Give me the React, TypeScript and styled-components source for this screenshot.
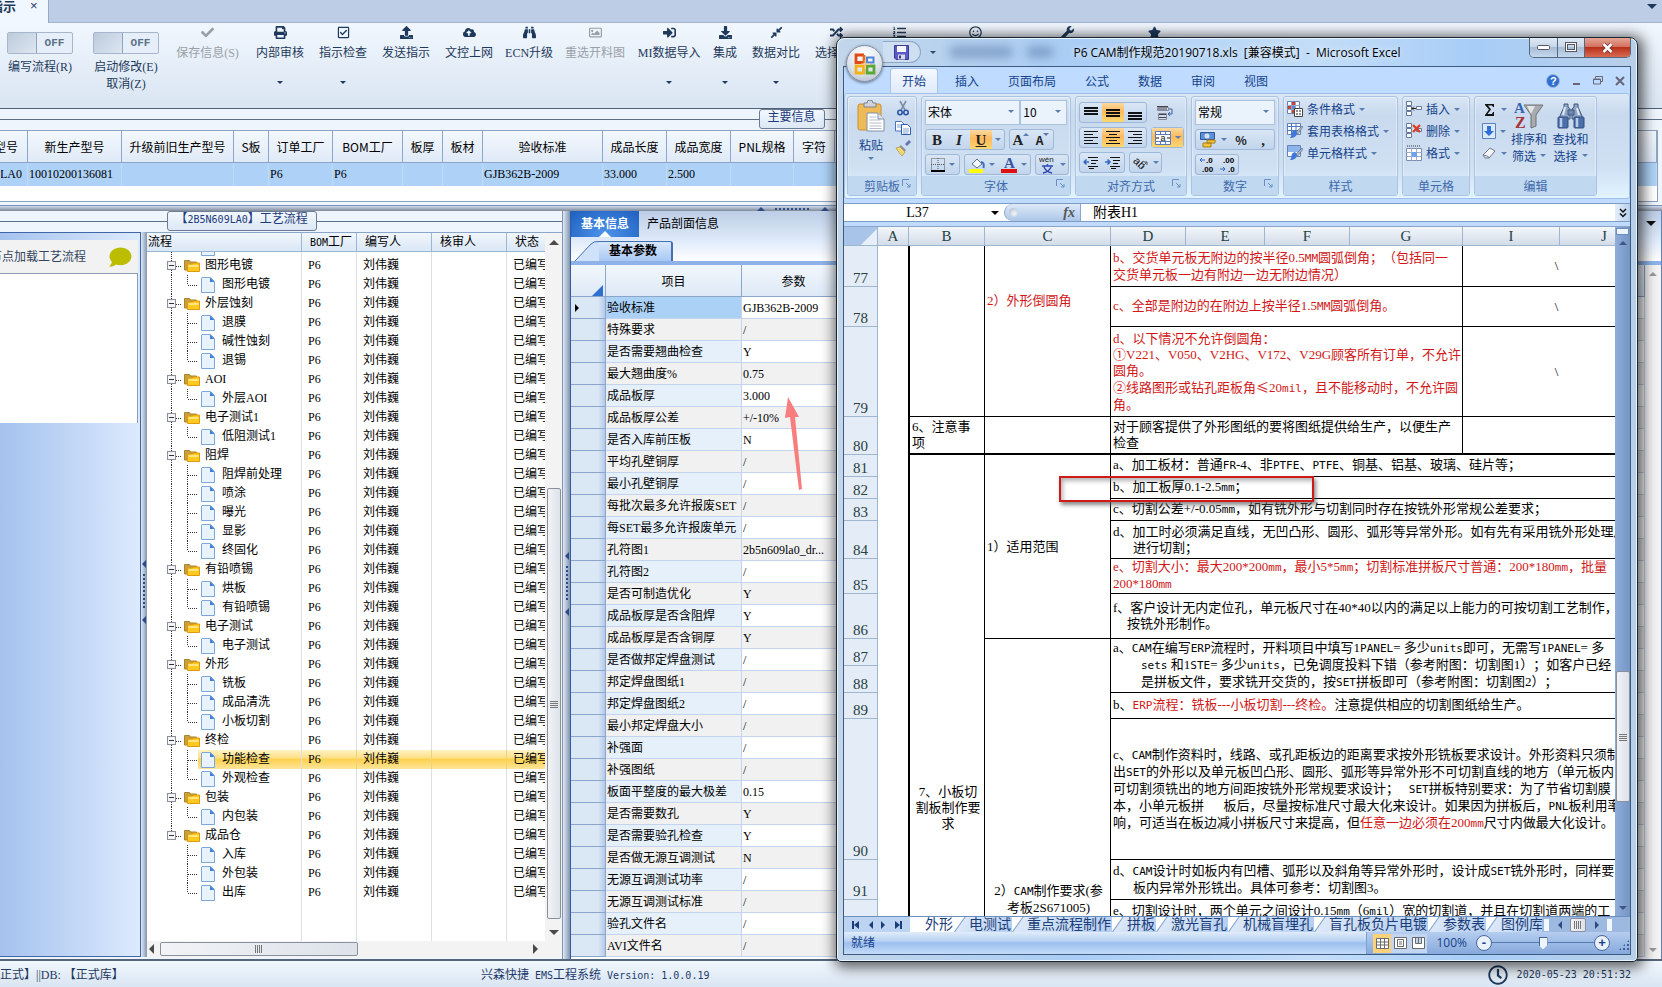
import React from 'react';
import styled, { createGlobalStyle, css } from 'styled-components';
import {
  FaCheck, FaPrint, FaRegCheckSquare, FaUpload, FaCloudUploadAlt, FaBinoculars, FaRegImage, FaSignInAlt,
  FaDownload, FaCompressAlt, FaRandom, FaListOl, FaRegSmile, FaWrench, FaStar, FaComment, FaRegClock,
} from 'react-icons/fa';

const song = '"Liberation Serif", "Noto Sans CJK SC", serif';
const hei = '"Noto Sans CJK SC", sans-serif';
const segoe = '"Open Sans", "Noto Sans CJK SC", sans-serif';

const Global = createGlobalStyle`
  * { box-sizing: border-box; }
  html, body { margin: 0; height: 100%; overflow: hidden; }
  body { font: 12px/16px ${song}; color: #000; background: #dfeaf7; text-spacing-trim: space-all; }
  #root { height: 100%; }
  button, input, select { font: inherit; color: inherit; margin: 0; padding: 0; border: 0; background: none; border-radius: 0; }
  table { border-collapse: separate; border-spacing: 0; table-layout: fixed; }
  th, td { padding: 0; font-weight: normal; text-align: left; }
`;

/* ---------- shared parts ---------- */

const Mono = styled.span<{ $size: number }>`
  font-family: "DejaVu Sans Mono", monospace;
  font-size: ${(p) => p.$size}px;
`;

const Wide = styled.span`
  font-family: ${hei};
`;

function Words({ children, size = 11 }: { children: string; size?: number }) {
  return (
    <>
      {children.split(/([A-Z]{2,}|mm|mil|units|sets|≤)/).map((part, i) => {
        if (part === '≤') return <Wide key={i}>{part}</Wide>;
        return i % 2 ? <Mono key={i} $size={size}>{part}</Mono> : part;
      })}
    </>
  );
}

const Caret = styled.i<{ $color?: string; $size?: number; $up?: boolean }>`
  flex: none;
  width: 0;
  height: 0;
  border: ${(p) => p.$size ?? 3}px solid transparent;
  border-${(p) => (p.$up ? 'bottom' : 'top')}-color: ${(p) => p.$color ?? '#5a7db0'};
  border-${(p) => (p.$up ? 'top' : 'bottom')}-width: 0;
`;

const SideCaret = styled.i<{ $right?: boolean; $color?: string; $size?: number }>`
  display: block;
  flex: none;
  width: 0;
  height: 0;
  border: ${(p) => p.$size ?? 5}px solid transparent;
  border-${(p) => (p.$right ? 'left' : 'right')}-color: ${(p) => p.$color ?? '#4a4a4a'};
  border-${(p) => (p.$right ? 'right' : 'left')}-width: 0;
`;

const Tail = styled.div`
  display: flex;
  justify-content: flex-end;
  overflow: hidden;
  white-space: nowrap;
`;

/* ---------- host application ---------- */

const Page = styled.div`
  position: relative;
  display: flex;
  flex-direction: column;
  height: 100vh;
  overflow: hidden;
  background: #edf4fc;
`;

const DocTabs = styled.nav`
  flex: none;
  display: flex;
  justify-content: space-between;
  height: 23px;
  background: #bccde5;
  border-bottom: 1px solid #9fb5d0;
`;

const DocTab = styled.div`
  display: flex;
  gap: 14px;
  width: 49px;
  height: 23px;
  background: #f1f7fe;
  border-right: 1px solid #93abc9;
  font: bold 13px/12px ${hei};
  color: #1e395b;
  ${Tail} { width: 16px; flex: none; }
  button { height: 12px; font: 13px/12px "Liberation Sans", sans-serif; }
`;

const TabMenu = styled.button`
  padding: 4px 5px 0;
  display: flex;
`;

const Toolbar = styled.header`
  flex: none;
  display: flex;
  gap: 15px;
  height: 86px;
  padding: 3px 0 0 6px;
  background: linear-gradient(#f1f7fe, #d9e5f2);
  border-bottom: 1px solid #4f6178;
  color: #1e395b;
`;

const Switches = styled.div`
  display: flex;
  gap: 18px;
  width: 153px;
  flex: none;
`;

const SwitchItem = styled.label`
  flex: none;
  display: flex;
  flex-direction: column;
  align-items: center;
  line-height: 17px;
  padding-top: 6px;
  width: 68px;
  white-space: nowrap;
  input { position: absolute; opacity: 0; }
`;

const Switch = styled.span`
  display: flex;
  flex: none;
  width: 66px;
  height: 22px;
  margin-bottom: 5px;
  border: 1px solid #a7b6ca;
  border-radius: 2px;
  background: #e6eff9;
  font: bold 11px/20px "Liberation Mono", monospace;
  color: #5c7188;
  &::before {
    content: "";
    width: 28px;
    border-right: 1px solid #8fa5bf;
    background: linear-gradient(135deg, #bccadb, #dde7f2);
  }
  b { flex: 1; text-align: center; }
`;

const Tool = styled.button<{ $off?: boolean; $w?: number; $start?: boolean }>`
  flex: none;
  display: flex;
  flex-direction: column;
  align-items: center;
  width: ${(p) => (p.$w ? `${p.$w}px` : 'auto')};
  height: 70px;
  white-space: nowrap;
  color: ${(p) => (p.$off ? '#9aa0a8' : 'inherit')};
  svg { width: 13px; height: 13px; margin: 0 0 4px; }
  span { line-height: 20px; align-self: ${(p) => (p.$start ? 'flex-start' : 'auto')}; }
  i { margin-top: 18px; }
`;

const Legend = styled.div<{ $l: number; $r: number; $h: number }>`
  flex: none;
  display: flex;
  height: ${(p) => p.$h}px;
  color: #1e3a7b;
  &::before, &::after {
    content: "";
    flex: ${(p) => p.$l} 0 0;
    height: 10px;
    border-bottom: 1px solid #5f6f88;
  }
  &::after { flex-grow: ${(p) => p.$r}; }
  > span {
    height: 20px;
    padding: 0 8px;
    border: 1px solid #6b7c96;
    border-radius: 3px;
    background: linear-gradient(#f2f8fe, #dce8f5);
    line-height: 14px;
    white-space: nowrap;
  }
`;

const MainInfo = styled.section`
  flex: none;
  height: 97px;
  background: #eef5fd;
  border-bottom: 1px solid #7b94b5;
`;

const InfoBody = styled.div`
  height: 72px;
  margin-right: 4px;
  background: #fff;
  border: 1px solid #8ba2c2;
  border-left: 0;
`;

const InfoTable = styled.table`
  width: 100%;
  th {
    height: 32px;
    border-right: 1px solid #8ba6c9;
    border-bottom: 1px solid #8ba6c9;
    background: linear-gradient(#f4f8fd, #dfeaf7);
    font-family: ${hei};
    text-align: center;
    white-space: nowrap;
  }
  td {
    height: 23px;
    padding: 0 0 2px 1px;
    border-right: 1px solid #c0dbf6;
    background: #aed2f7;
    white-space: nowrap;
  }
  th ${Tail} { padding-right: 9px; }
  td ${Tail} { padding-right: 5px; }
`;

const HSplit = styled.div`
  flex: none;
  display: flex;
  align-items: center;
  gap: 10px;
  height: 5px;
  padding-left: 757px;
  background: linear-gradient(#cfdcf0, #7f8896);
`;

const Dots = styled.i<{ $v?: boolean }>`
  ${(p) => (p.$v
    ? css`width: 2px; height: 36px; background: repeating-linear-gradient(#2d4a85 0 2px, transparent 2px 4px);`
    : css`width: 36px; height: 2px; background: repeating-linear-gradient(90deg, #2d4a85 0 2px, transparent 2px 4px);`)}
`;

const Work = styled.main`
  flex: 1;
  min-height: 0;
  display: flex;
  border-bottom: 2px solid #56657b;
`;

const FlowPanel = styled.section`
  flex: none;
  width: 563px;
  display: flex;
  flex-direction: column;
  background: #eef5fd;
  border-right: 1px solid #8595ad;
`;

const FlowBody = styled.div`
  flex: 1;
  min-height: 0;
  display: flex;
  padding-bottom: 2px;
`;

const Messages = styled.aside`
  flex: none;
  width: 141px;
  padding: 7px 2px 0 0;
  border: 1px solid #3f67a8;
  border-width: 1px 1px 1px 0;
  background: linear-gradient(90deg, #a5c2ee, #dceafd);
`;

const MessageHead = styled.div`
  display: flex;
  align-items: center;
  gap: 22px;
  height: 34px;
  background: #f2f2f3;
  border-bottom: 1px solid #8f9db3;
  color: #33465e;
  ${Tail} { width: 86px; }
  svg { width: 25px; height: 22px; color: #bcbc00; }
`;

const MessageBox = styled.div`
  height: 149px;
  background: #fff;
  border-right: 1px solid #8f9db3;
`;

const VSplit = styled.div<{ $w: number; $top: number }>`
  flex: none;
  display: flex;
  flex-direction: column;
  align-items: center;
  gap: 6px;
  width: ${(p) => p.$w}px;
  padding-top: ${(p) => p.$top}px;
  background: linear-gradient(90deg, #dfeaf8, #8495ad);
`;

const TreeBox = styled.div`
  flex: 1;
  min-width: 0;
  display: flex;
  background: #fff;
  border-top: 1px solid #8ba6c9;
`;

const TreeMain = styled.div`
  flex: 1;
  min-width: 0;
  display: flex;
  flex-direction: column;
  overflow: hidden;
`;

const TreeScroll = styled.div`
  flex: 1;
  min-height: 0;
  overflow: hidden;
`;

const TreeTable = styled.table`
  width: 100%;
  height: 100%;
  th {
    height: 19px;
    padding-left: 8px;
    border-right: 1px solid #9db6d6;
    border-bottom: 1px solid #9db6d6;
    background: linear-gradient(#f0f6fd, #dbe7f6);
    line-height: 16px;
    white-space: nowrap;
  }
  th:first-child { padding-left: 1px; }
  td {
    border-right: 1px solid #dcdfe4;
    overflow: hidden;
    white-space: nowrap;
  }
  th:last-child, td:last-child { border-right: 0; }
`;

const gold = 'linear-gradient(#fff2c4, #fde08a 40%, #fdd24f 50%, #fee59a)';

const TreeRow = styled.tr<{ $active?: boolean }>`
  height: 19px;
  td { height: 19px; padding-left: 6px; line-height: 19px; }
  td:first-child { padding-left: 0; }
  ${(p) => p.$active && css`td + td { background: ${gold}; border-color: #efd27c; }`}
`;

const dots = 'repeating-linear-gradient(#333 0 1px, transparent 1px 2px)';
const hdots = 'repeating-linear-gradient(90deg, #333 0 1px, transparent 1px 2px)';

const NodeCell = styled.div<{ $group?: boolean; $trunk: string; $branch: string }>`
  display: flex;
  align-items: center;
  height: 100%;
  padding-left: ${(p) => (p.$group ? 20 : 51)}px;
  background:
    ${dots} 24px 0 / 1px ${(p) => p.$trunk} no-repeat,
    ${dots} 40px 0 / 1px ${(p) => p.$branch} no-repeat,
    ${hdots} ${(p) => (p.$group ? '29px 10px / 6px' : '41px 10px / 9px')} 1px no-repeat;
`;

const Expander = styled.button`
  width: 9px;
  height: 9px;
  margin-right: 8px;
  border: 1px solid #8a8f99;
  background: linear-gradient(#333, #333) 1px 3px / 5px 1px no-repeat #f4f4f4;
`;

const NodeLabel = styled.span<{ $active?: boolean; $group?: boolean }>`
  display: flex;
  align-items: center;
  gap: 7px;
  flex: 1;
  height: 19px;
  padding-left: ${(p) => (p.$group ? 5 : 3)}px;
  background: ${(p) => (p.$active ? gold : 'none')};
`;

const PeekRow = styled.tr`
  height: 4px;
  td { height: 4px; }
  div { height: 4px; align-items: flex-end; overflow: hidden; }
`;

const VBar = styled.div<{ $w?: number }>`
  flex: none;
  display: flex;
  flex-direction: column;
  align-items: center;
  justify-content: space-between;
  width: ${(p) => p.$w ?? 17}px;
  padding: 7px 0;
  background: #f3f3f4;
`;

const Thumb = styled.div<{ $h?: number; $w?: number }>`
  flex: none;
  display: flex;
  align-items: center;
  justify-content: center;
  width: ${(p) => (p.$w ? `${p.$w}px` : '14px')};
  height: ${(p) => (p.$h ? `${p.$h}px` : '14px')};
  border: 1px solid #8b919c;
  border-radius: 2px;
  background: linear-gradient(90deg, #f1f3f6, #dde2ea);
  &::after {
    content: "";
    width: 8px;
    height: 8px;
    background: repeating-linear-gradient(${(p) => (p.$w ? '90deg' : '0deg')}, #777 0 1px, transparent 1px 2px);
  }
`;

const TreeVBar = styled(VBar)`
  padding-bottom: 22px;
  ${Thumb} { margin: auto 0 11px; }
`;

const HBar = styled.div`
  flex: none;
  display: flex;
  align-items: center;
  gap: 6px;
  height: 16px;
  padding: 0 7px 0 2px;
  background: #f3f3f4;
  ${SideCaret}:last-child { margin-left: auto; }
`;

const ParamPanel = styled.section`
  flex: 1;
  min-width: 0;
  display: flex;
  flex-direction: column;
  border-left: 1px solid #2f5da8;
  border-right: 1px solid #5f83b8;
  background: #fff;
`;

const PageTabs = styled.div`
  flex: none;
  display: flex;
  align-items: stretch;
  height: 26px;
  background: linear-gradient(#bccde6, #dbe7f6);
  font-size: 12px;
  ${TabMenu} { margin-left: auto; padding-top: 10px; }
`;

const PageTab = styled.button<{ $active?: boolean }>`
  position: relative;
  width: ${(p) => (p.$active ? 68 : 88)}px;
  line-height: 22px;
  font-weight: ${(p) => (p.$active ? 'bold' : 'normal')};
  color: ${(p) => (p.$active ? '#fff' : '#000')};
  background: ${(p) => (p.$active ? 'radial-gradient(ellipse at 50% 90%, #4d94ea, #1f5fc0)' : 'none')};
  ${(p) => p.$active && css`
    &::after {
      content: "";
      position: absolute;
      left: 28px;
      bottom: 0;
      border: 6px solid transparent;
      border-top-width: 0;
      border-bottom-color: #fff;
    }
  `}
`;

const SubTabs = styled.div`
  flex: none;
  display: flex;
  align-items: flex-end;
  height: 28px;
  padding-left: 4px;
  border-bottom: 4px solid #8fb3e8;
  background: linear-gradient(#dae7fa, #fff);
`;

const SubTab = styled.button`
  display: flex;
  align-items: stretch;
  height: 20px;
  font-weight: bold;
  line-height: 18px;
  svg { display: block; }
  span {
    width: 74px;
    padding-left: 10px;
    text-align: left;
    border: solid #4470b4;
    border-width: 1px 2px 0 0;
    border-radius: 0 3px 0 0;
    background: linear-gradient(#d8e7fb, #a9c8f3);
  }
`;

const ParamBody = styled.div`
  flex: 1;
  min-height: 0;
  display: flex;
  overflow: hidden;
`;

const ParamTable = styled.table`
  flex: 1;
  min-width: 0;
  align-self: flex-start;
  th, td { border-right: 1px solid #c3d4ec; border-bottom: 1px solid #c3d4ec; white-space: nowrap; overflow: hidden; }
  thead th {
    height: 32px;
    border-color: #8ba6c9;
    background: linear-gradient(#f2f7fd, #dde9f6);
    text-align: center;
    font-family: ${hei};
  }
  thead th:first-child { vertical-align: bottom; text-align: right; padding-right: 2px; line-height: 0; }
  tbody tr { height: 22px; background: #fff; }
  tbody tr:nth-child(even) { background: #f1f1f1; }
  tbody td { padding-left: 1px; line-height: 20px; }
  tbody td:first-child { border-color: #8ba6c9; background: linear-gradient(90deg, #dae7f5 80%, #b4c8ea); padding-left: 4px; }
  tbody tr:nth-child(odd) td:nth-child(2) { background: #e6f0fb; }
  tbody tr:first-child td:nth-child(2) { background: #abd1f7; }
`;

const StatusBar = styled.footer`
  flex: none;
  display: flex;
  align-items: center;
  justify-content: space-between;
  height: 26px;
  padding: 2px 31px 0 0;
  background: linear-gradient(#f1f7fe, #d9e5f2);
  color: #1e395b;
  white-space: pre;
  > span:first-child { width: 481px; }
  > span:nth-child(2) { flex: 1; color: #1e3a6b; }
`;

const Clock = styled.span`
  display: flex;
  align-items: center;
  gap: 9px;
  svg { width: 20px; height: 20px; }
`;

const Arrow = styled.svg`
  position: absolute;
  left: 780px;
  top: 396px;
  pointer-events: none;
`;

/* ---------- spreadsheet window ---------- */

const Win = styled.section`
  position: absolute;
  left: 836px;
  right: 24px;
  top: 37px;
  bottom: 25px;
  display: flex;
  flex-direction: column;
  padding: 0 6px 6px;
  border: 1px solid #1b2533;
  border-radius: 8px 8px 5px 5px;
  background: linear-gradient(90deg, #c3d6ea, #a9cdf5 30%, #c3ddf8 60%, #a7cdf7 80%, #b8cfe8);
  box-shadow: inset 0 0 0 1px #eaf4ff, 2px 2px 14px 3px rgba(0, 0, 0, 0.65);
`;

const TitleBar = styled.header`
  flex: none;
  display: grid;
  grid-template-columns: 1fr auto 1fr;
  align-items: center;
  height: 28px;
  h1 { margin: 0; padding-top: 2px; font: 12px/16px ${segoe}; white-space: pre; text-shadow: 0 0 6px #fff; }
`;

const Quick = styled.div`
  display: flex;
  align-items: center;
  gap: 9px;
  margin-left: 40px;
`;

const Glass = styled.i<{ $w: number }>`
  width: ${(p) => p.$w}px;
  height: 12px;
  margin-left: 4px;
  border-radius: 6px;
  background: rgba(60, 95, 145, 0.4);
  filter: blur(5px);
`;

const QuickPill = styled.div`
  flex: none;
  display: flex;
  align-items: center;
  justify-content: center;
  width: 38px;
  height: 22px;
  border: 1px solid #8fa6c4;
  border-left: 0;
  border-radius: 0 11px 11px 0;
  background: #cfdff2;
`;

const WinButtons = styled.div`
  justify-self: end;
  align-self: start;
  display: flex;
  height: 20px;
  border: 1px solid #56677f;
  border-top: 0;
  border-radius: 0 0 5px 5px;
  overflow: hidden;
`;

const WinButton = styled.button<{ $close?: boolean }>`
  display: flex;
  align-items: center;
  justify-content: center;
  width: ${(p) => (p.$close ? 46 : 27)}px;
  border-left: 1px solid #56677f;
  background: ${(p) => (p.$close
    ? 'linear-gradient(#e5a595, #d2705c 48%, #b8301c 50%, #d96b50)'
    : 'linear-gradient(#dfe9f5, #c6d6e8 48%, #a8bdd6 50%, #c4d8ee)')};
  &:first-child { border-left: 0; }
`;

const OfficeButton = styled.button`
  position: absolute;
  left: 9px;
  top: 7px;
  width: 37px;
  height: 37px;
  && {
    border: 1px solid #7f8ea3;
    border-radius: 50%;
    background: radial-gradient(circle at 50% 25%, #fff, #dbe1ea 60%, #a9b6c9);
  }
  display: flex;
  align-items: center;
  justify-content: center;
  box-shadow: 0 1px 3px rgba(0, 0, 0, 0.5);
`;

const Client = styled.div`
  flex: 1;
  min-height: 0;
  display: flex;
  flex-direction: column;
  border: 1px solid #3d5a80;
  background: #bfdbff;
`;

const RibbonTabs = styled.nav`
  flex: none;
  display: flex;
  align-items: flex-end;
  height: 26px;
  padding-left: 46px;
  font: 12px/16px ${hei};
  color: #15428b;
`;

const RibbonTab = styled.button<{ $active?: boolean }>`
  height: 25px;
  padding: ${(p) => (p.$active ? '0 11px' : '0 14px 0 15px')};
  margin-right: ${(p) => (p.$active ? 2 : 0)}px;
  ${(p) => p.$active && css`
    && {
      border: 1px solid #a8c4e6;
      border-bottom: 0;
      border-radius: 3px 3px 0 0;
      background: linear-gradient(#f4f9ff, #dfeafa);
    }
  `}
`;

const BookTools = styled.div`
  display: flex;
  align-items: center;
  gap: 12px;
  height: 25px;
  margin-left: auto;
  padding-right: 5px;
  button { display: flex; }
`;

const Ribbon = styled.div`
  flex: none;
  display: flex;
  gap: 4px;
  height: 106px;
  padding: 2px 0 3px 2px;
  border: 1px solid #a0c0e8;
  border-radius: 3px;
  background: linear-gradient(#dbe7f5, #c9daee 20%, #cfe0f3 70%, #e2f4ff);
  font: 12px/16px ${hei};
  color: #15428b;
`;

const Group = styled.fieldset<{ $w: number }>`
  flex: none;
  display: flex;
  flex-direction: column;
  width: ${(p) => p.$w}px;
  min-width: 0;
  height: 100px;
  margin: 0;
  padding: 0;
  border: 1px solid #a9c3e0;
  border-radius: 3px;
  box-shadow: inset 0 0 0 1px rgba(255, 255, 255, 0.4);
`;

const GroupBody = styled.div<{ $row?: boolean; $gap?: number; $pad?: number }>`
  flex: 1;
  min-height: 0;
  display: flex;
  flex-direction: ${(p) => (p.$row ? 'row' : 'column')};
  justify-content: ${(p) => (p.$row ? 'space-evenly' : 'flex-start')};
  gap: ${(p) => p.$gap ?? 4}px;
  padding: ${(p) => p.$pad ?? 3}px 3px 0;
`;

const GroupCaption = styled.div`
  flex: none;
  display: flex;
  align-items: center;
  justify-content: center;
  height: 19px;
  background: #c1d8f1;
  color: #3e6aaa;
  span { flex: 1; text-align: center; }
  svg { margin: 0 5px 4px -14px; }
`;

const Row = styled.div<{ $gap?: number }>`
  display: flex;
  align-items: center;
  gap: ${(p) => p.$gap ?? 4}px;
`;

const Cluster = styled.div`
  display: flex;
  align-items: stretch;
  height: 21px;
  border: 1px solid #9db8d9;
  border-radius: 3px;
  background: linear-gradient(#d9e6f5, #c2d5ec);
`;

const Small = styled.button<{ $on?: boolean; $w?: number; $serif?: boolean; $raised?: boolean }>`
  display: flex;
  align-items: center;
  justify-content: center;
  gap: ${(p) => (p.$raised ? 0 : 4)}px;
  width: ${(p) => p.$w ?? 22}px;
  && {
    color: #222;
    background: ${(p) => (p.$on ? 'linear-gradient(#fbd9a0, #fdb95c 45%, #fcd76f)' : 'none')};
    ${(p) => p.$serif && css`font: bold 15px/18px "Liberation Serif", serif;`}
  }
  ${(p) => p.$raised && css`i { align-self: flex-start; margin-top: 3px; }`}
`;

const Picker = styled.label<{ $w: number }>`
  display: flex;
  align-items: center;
  width: ${(p) => p.$w}px;
  height: 25px;
  padding: 0 5px 2px 2px;
  border: 1px solid #abc1de;
  background: #eaf2fb;
  color: #000;
  select { flex: 1; min-width: 0; appearance: none; outline: 0; }
`;

const Command = styled.button`
  display: flex;
  align-items: center;
  gap: 4px;
  height: 18px;
  white-space: nowrap;
`;

const Big = styled.button<{ $w: number }>`
  display: flex;
  flex-direction: column;
  align-items: center;
  width: ${(p) => p.$w}px;
  span { display: flex; align-items: center; gap: 4px; line-height: 17px; }
`;

const Paste = styled(Big)`
  span { margin: 4px 0; }
`;

const Stack = styled.div<{ $gap?: number }>`
  display: flex;
  flex-direction: column;
  gap: ${(p) => p.$gap ?? 4}px;
`;

const FormulaBar = styled.div`
  flex: none;
  display: flex;
  height: 19px;
  margin: 4px 0;
  background: #fff;
  border-top: 1px solid #7e9cc4;
  border-bottom: 1px solid #7e9cc4;
  font: 14px/17px ${song};
`;

const NameBox = styled.label`
  display: flex;
  align-items: center;
  width: 160px;
  padding-right: 5px;
  input { flex: 1; min-width: 0; text-align: center; }
`;

const FxBox = styled.div`
  display: flex;
  align-items: center;
  justify-content: space-between;
  width: 77px;
  padding: 0 5px 0 4px;
  border-radius: 9px 0 0 9px;
  border: solid #8ba7cf;
  border-width: 0 1px;
  background: linear-gradient(#dde9f8, #adc7e9);
  i { width: 9px; height: 9px; border-radius: 50%; background: radial-gradient(circle at 60% 60%, #f5f8fc, #a5b6cc); }
  em { font: italic bold 14px/16px "Liberation Serif", serif; color: #555; }
`;

const FormulaInput = styled.input`
  && { flex: 1; min-width: 0; padding-left: 12px; }
`;

const ExpandButton = styled.button`
  display: flex;
  align-items: center;
  justify-content: center;
  width: 15px;
  && { background: linear-gradient(90deg, #e4eefa, #b8cfec); }
`;

const SheetArea = styled.div`
  position: relative;
  flex: 1;
  min-height: 0;
  display: flex;
  border-top: 1px solid #8aa5c8;
`;

const SheetScroll = styled.div`
  flex: 1;
  min-width: 0;
  overflow: hidden;
  background: #fff;
`;

const Sheet = styled.table`
  width: 805px;
  font: 13px/16px ${song};
  thead th {
    height: 19px;
    border-right: 1px solid #9eb6ce;
    border-bottom: 1px solid #9eb6ce;
    background: linear-gradient(#f3f7fb, #d3dce9);
    font-size: 15px;
    text-align: center;
    color: #27413e;
  }
  thead th:first-child { background: linear-gradient(135deg, #a9c4e9 68%, #e6effa 69%); }
  tbody th {
    border-right: 1px solid #9eb6ce;
    border-bottom: 1px solid #9eb6ce;
    background: #e4ecf7;
    vertical-align: bottom;
    text-align: center;
    font-size: 15px;
    color: #27413e;
  }
`;

const Cell = styled.td<{ $red?: boolean; $center?: boolean; $thick?: boolean; $left?: boolean; $top?: boolean; $open?: boolean; $below?: number }>`
  && {
    padding: ${(p) => (p.$top ? 3 : 0)}px 0 ${(p) => p.$below ?? 0}px 2px;
    border-right: 1px solid #000;
    border-bottom: ${(p) => (p.$open ? 0 : p.$thick ? 2 : 1)}px solid #000;
    vertical-align: ${(p) => (p.$top ? 'top' : 'middle')};
    text-align: ${(p) => (p.$center ? 'center' : 'left')};
    color: ${(p) => (p.$red ? '#d01818' : '#000')};
    white-space: pre;
    overflow: hidden;
    ${(p) => p.$left && css`border-left: 1px solid #000;`}
  }
`;

const Ln = styled.div<{ $in?: number }>`
  padding-left: ${(p) => p.$in ?? 0}px;
`;

const Red = styled.span`
  color: #d01818;
`;

const Mark = styled.div`
  position: absolute;
  left: 215px;
  top: 249px;
  width: 255px;
  height: 26px;
  border: 2px solid #cf1a1a;
  box-shadow: 2px 3px 4px rgba(90, 90, 90, 0.7), inset 2px 3px 4px rgba(90, 90, 90, 0.45);
`;

const SheetVBar = styled.div`
  flex: none;
  display: flex;
  flex-direction: column;
  align-items: center;
  width: 15px;
  padding: 1px 0 6px;
  background: linear-gradient(90deg, #8fadd8, #7595c6);
  > span { width: 13px; height: 7px; border: 1px solid #6d8fc0; background: #eef5fd; }
  ${Caret}:nth-child(2) { margin-top: 6px; }
  ${Thumb} { margin-top: auto; }
  ${Caret}:last-child { margin-top: 104px; }
`;

const SheetTabs = styled.nav`
  flex: none;
  display: flex;
  align-items: stretch;
  height: 16px;
  background: #7f9fcc;
  border-top: 1px solid #6d8fc0;
`;

const TabNav = styled.div`
  flex: none;
  display: flex;
  align-items: center;
  justify-content: space-evenly;
  width: 66px;
  background: #bcd3f1;
  button { display: flex; align-items: center; }
`;

const TabStrip = styled.div`
  flex: 1;
  min-width: 0;
  display: flex;
  overflow: hidden;
`;

const SheetTab = styled.button<{ $active?: boolean }>`
  && {
    flex: none;
    padding: 0 1px 0 15px;
    font: 14px/14px ${song};
    white-space: nowrap;
    color: #1b3d78;
    background: ${(p) => (p.$active
      ? '#fff'
      : 'linear-gradient(125deg, #fff 8px, #7f9fcc 9px, #dbe8f8 10px, #b3cdf0)')};
  }
`;

const TabScroll = styled.div`
  flex: none;
  display: flex;
  align-items: center;
  justify-content: space-between;
  width: 88px;
  padding: 0 18px 0 2px;
  background: #9db9e0;
  > span { width: 5px; height: 12px; background: #f2f7fd; }
`;

const BookStatus = styled.footer`
  flex: none;
  display: flex;
  align-items: center;
  justify-content: space-between;
  height: 22px;
  padding-left: 7px;
  background: linear-gradient(#e0ecfb, #b9d2f2 40%, #9dc0ee 50%, #c4dbf8);
  font: 12px/16px ${segoe};
  color: #15428b;
`;

const ViewTools = styled.div`
  display: flex;
  align-items: center;
  height: 22px;
  padding-left: 6px;
  border-left: 1px solid #7d9fce;
  background: linear-gradient(#b5cdef, #86a9dc);
  > span { margin: 0 9px; }
`;

const ViewButton = styled.button<{ $on?: boolean }>`
  display: flex;
  align-items: center;
  justify-content: center;
  width: 18px;
  height: 19px;
  && { background: ${(p) => (p.$on ? '#fbd27a' : '#c2d6f1')}; }
`;

const Zoom = styled.input`
  appearance: none;
  width: 102px;
  && { height: 14px; background: linear-gradient(#5679b0, #5679b0) 0 6px / 100% 1px no-repeat; }
  &::-webkit-slider-thumb {
    appearance: none;
    width: 9px;
    height: 13px;
    border: 1px solid #49648e;
    background: #eef4fb;
    clip-path: polygon(0 0, 100% 0, 100% 65%, 50% 100%, 0 65%);
  }
`;

const Round = styled.button`
  width: 16px;
  height: 16px;
  && { border: 1px solid #4a679a; border-radius: 50%; background: #e9f1fb; font: bold 13px/12px "Liberation Sans", sans-serif; }
`;

const Grip = styled.i`
  width: 12px;
  height: 12px;
  margin: 4px 0 0 8px;
  background: radial-gradient(circle, #3c5f9a 1px, transparent 1px) 0 0 / 4px 4px;
  clip-path: polygon(100% 0, 100% 100%, 0 100%);
`;

/* ---------- drawings ---------- */

const Folder = () => (
  <svg width="16" height="14" viewBox="0 0 16 14">
    <path d="M0.5 11V1.5h5l1 1.5h6v8z" fill="#c9a03c" stroke="#a9842a" />
    <path d="M3.5 12.5V5h5l1-1h6v8.5z" fill="#ffc91f" stroke="#e09a10" />
    <path d="M4.5 6h10v2h-10z" fill="#ffe680" />
  </svg>
);
const Sheetlet = () => (
  <svg width="14" height="16" viewBox="0 0 14 16">
    <path d="M1 .5h8.500l4 4V15.500H.5V1z" fill="#e9f3fd" stroke="#7aa7dc" />
    <path d="M9 .5v4.500h4.500z" fill="#3f7fd6" />
  </svg>
);
const PasteIcon = () => (
  <svg width="28" height="32" viewBox="0 0 28 32">
    <rect x="1" y="4" width="23" height="26" rx="2" fill="#eebb58" stroke="#c78f35" />
    <path d="M7 7V3h3a3 3 0 0 1 6 0h3v4z" fill="#d0d4da" stroke="#7d828c" />
    <path d="M10 13h11l6 6v12H10z" fill="#fff" stroke="#8190a8" />
    <path d="M12.500 17h7M12.500 20h11M12.500 23h12M12.500 26h12M12.500 28.500h12" stroke="#b5bdc9" />
    <path d="M21 13v6h6" fill="#dfe6ef" stroke="#8190a8" />
  </svg>
);
const Cut = () => (
  <svg width="14" height="16" viewBox="0 0 14 16" fill="none">
    <path d="M4 1l5 9M10 1L5 10" stroke="#7d8ea8" strokeWidth="1.600" />
    <circle cx="4" cy="12.500" r="2.200" stroke="#2c55a5" strokeWidth="1.600" />
    <circle cx="10" cy="12.500" r="2.200" stroke="#2c55a5" strokeWidth="1.600" />
  </svg>
);
const Copy = () => (
  <svg width="16" height="14" viewBox="0 0 16 14">
    <path d="M.5.5h6l2.500 2.500v7H.5z" fill="#fff" stroke="#4a74bd" />
    <path d="M6.500 3.500h6l3 3v7h-9z" fill="#fff" stroke="#2c5cb0" />
    <path d="M2 4h4M2 6h4M8 8h6M8 10h6M8 12h5" stroke="#7da0d8" />
  </svg>
);
const Brush = () => (
  <svg width="16" height="16" viewBox="0 0 16 16">
    <path d="M10 4l4-4 2 2-4 4z" fill="#6774b0" />
    <path d="M6 5l5 5-2 2-5-5z" fill="#8c8fa8" />
    <path d="M1 8l4-1 5 5-3 4C5 14 3 11 1 8z" fill="#f0d878" stroke="#b89a3a" strokeWidth=".8" />
  </svg>
);
const Launcher = () => (
  <svg width="9" height="9" viewBox="0 0 9 9" fill="none" stroke="#6b8fc4">
    <path d="M.5 7V.5H7" /><path d="M4 4l4 4M8 5v3H5" />
  </svg>
);
const Lines = ({ y = 3, rows = [14, 14, 14], align = 'l' }: { y?: number; rows?: number[]; align?: string }) => (
  <svg width="16" height="16" viewBox="0 0 16 16" stroke="#111" shapeRendering="crispEdges">
    {rows.map((w, i) => {
      const x = align === 'l' ? 1 : align === 'r' ? 15 - w : 8 - w / 2;
      return <path key={i} strokeWidth={rows.length > 3 ? 1 : 2} d={`M${x} ${y + i * 3 + (rows.length > 3 ? 0.5 : 0)}h${w}`} />;
    })}
  </svg>
);
const Indent = ({ flip }: { flip?: boolean }) => (
  <svg width="16" height="14" viewBox="0 0 16 14" fill="none">
    <path d="M5 1.500h10M8 4.500h7M8 7.500h5M5 10.500h10M6 12.500h5" stroke="#111" />
    <path d={flip ? 'M0 6h4M2.500 3.500L5 6 2.500 8.500' : 'M6 6H2M3.500 3.500L1 6l2.500 2.500'} stroke="#3467c0" strokeWidth="1.500" />
  </svg>
);
const ConditionIcon = () => (
  <svg width="16" height="16" viewBox="0 0 16 16">
    <path d="M.5.5h12v12H.5z" fill="#fff" stroke="#6683b5" />
    <path d="M.5 4.500h12M.5 8.500h12M4.500.5v12M8.500.5v12" stroke="#8fa5cb" />
    <path d="M5 1h3v3H5zM1 5h3v3H1zM5 9h3v3H5z" fill="#d0402c" /><path d="M5 5h3v3H5z" fill="#5a86cf" />
    <path d="M7.500 7.500h8v8h-8z" fill="#fff" stroke="#444" /><path d="M9 10h2M12 10h2M9 13h2M12 13h2" stroke="#222" />
  </svg>
);
const TableStyleIcon = ({ plain }: { plain?: boolean }) => (
  <svg width="16" height="16" viewBox="0 0 16 16">
    <path d="M.5.5h13v11H.5z" fill="#fff" stroke="#6683b5" />
    {plain ? <path d="M1 1h12v6H1z" fill="#8db4ec" /> : <path d="M.5 3.500h13M.5 7.500h13M4.500.5v11M9 .5v11" stroke="#4a74bd" />}
    <path d="M5 9c2-3 5-2 5 1s-3 5-7 5c2-2 1-4 2-6z" fill="#3f78d8" />
    <path d="M9 9l6-6 1 1-5 7z" fill="#9fb0c8" stroke="#5b6c88" strokeWidth=".6" />
  </svg>
);
const CellsIcon = ({ mark }: { mark: string }) => (
  <svg width="16" height="16" viewBox="0 0 16 16" fill="#fff" stroke="#66799a">
    <path d="M.5.5h5v4h-5zM.5 5.500h5v4h-5zM.5 10.500h5v4h-5zM10.500 5.500h5v3h-5z" />
    <path d={mark === 'x' ? 'M7 2l7 7M14 2L7 9' : 'M10 7.500H6M8 5.500l-2 2 2 2'} stroke={mark === 'x' ? '#e03a20' : '#222'} strokeWidth={mark === 'x' ? 2.2 : 1} />
  </svg>
);
const FormatIcon = () => (
  <svg width="16" height="16" viewBox="0 0 16 16">
    <path d="M.5 3.500h15v12H.5z" fill="#fff" stroke="#7b8eb0" />
    <path d="M.5 7.500h15M.5 11.500h15M5.500 3.500v12M10.500 3.500v12" stroke="#9fb0cc" />
    <path d="M6 7h5v5H6z" fill="#6fa3ec" /><path d="M1 1h14" stroke="#333" strokeDasharray="1 1" />
  </svg>
);
const SortIcon = () => (
  <svg width="30" height="30" viewBox="0 0 30 30">
    <path d="M10 5h19l-7 10v11l-5 2V15z" fill="#a9abad" stroke="#6f7276" />
    <path d="M13 6h8l-4 8z" fill="#e4e5e6" />
    <text x="0" y="13" fontFamily="Liberation Serif" fontWeight="bold" fontSize="15" fill="#3464b4">A</text>
    <text x="1" y="28" fontFamily="Liberation Serif" fontWeight="bold" fontSize="16" fill="#a8323a">Z</text>
  </svg>
);
const FindIcon = () => (
  <svg width="28" height="30" viewBox="0 0 28 30">
    <path d="M7 7V4h4v3l2 2v10H3v-3zM17 7V4h4v3l4 9v3H15V9z" fill="#8fa6c6" stroke="#41597f" />
    <path d="M11 10h6v5h-6z" fill="#6f89b0" stroke="#41597f" />
    <rect x="1" y="17" width="10" height="11" rx="1" fill="#4d6fa8" stroke="#2f4e82" />
    <rect x="17" y="17" width="10" height="11" rx="1" fill="#4d6fa8" stroke="#2f4e82" />
    <path d="M4 18v9M20 18v9" stroke="#b9cdea" strokeWidth="2.500" />
    <path d="M8 7l-2 8M20 8l2 7" stroke="#dfe9f6" strokeWidth="2" />
  </svg>
);
const Save = () => (
  <svg width="15" height="15" viewBox="0 0 15 15">
    <path d="M.5.5h14v14H2L.5 13z" fill="#5a5ac8" stroke="#3b3b94" />
    <path d="M3 1h9v6H3z" fill="#f4f6fb" /><path d="M4 9.500h7v5H4z" fill="#d7dae6" /><path d="M5 10.500h2v3H5z" fill="#3b3b94" />
  </svg>
);
const OfficeLogo = () => (
  <svg width="24" height="24" viewBox="0 0 24 24" fill="none" strokeWidth="2.800">
    <path d="M10.500 10.500H3V3h8" stroke="#dd4a14" /><path d="M11 3v8" stroke="#ea6a1c" />
    <path d="M14 10.500V5.500h6.500v5z" stroke="#4d84d8" strokeWidth="2" />
    <path d="M10.500 14v7H3v-7z" stroke="#f3b11c" /><path d="M14 14h7v7h-7z" stroke="#5aa836" />
    <path d="M12.300 8v9M8 12.300h9" stroke="#f4c890" strokeWidth="1.500" />
  </svg>
);

/* ---------- data ---------- */

const infoCols: [string, number | undefined, string][] = [
  ['型号', 28, '2B5N609LA0'], ['新生产型号', 94, '10010200136081'], ['升级前旧生产型号', 112, ''], ['S板', 35, ''],
  ['订单工厂', 64, 'P6'], ['BOM工厂', 70, 'P6'], ['板厚', 40, ''], ['板材', 40, ''], ['验收标准', 120, 'GJB362B-2009'],
  ['成品长度', 64, '33.000'], ['成品宽度', 64, '2.500'], ['PNL规格', 63, ''], ['字符', 41, ''], ['', undefined, ''],
];

const tree: [string, string[]][] = [
  ['图形电镀', ['图形电镀']], ['外层蚀刻', ['退膜', '碱性蚀刻', '退锡']], ['AOI', ['外层AOI']], ['电子测试1', ['低阻测试1']],
  ['阻焊', ['阻焊前处理', '喷涂', '曝光', '显影', '终固化']], ['有铅喷锡', ['烘板', '有铅喷锡']], ['电子测试', ['电子测试']],
  ['外形', ['铣板', '成品清洗', '小板切割']], ['终检', ['功能检查', '外观检查']], ['包装', ['内包装']],
  ['成品仓', ['入库', '外包装', '出库']],
];

const params: [string, string][] = [
  ['验收标准', 'GJB362B-2009'], ['特殊要求', '/'], ['是否需要翘曲检查', 'Y'], ['最大翘曲度%', '0.75'], ['成品板厚', '3.000'],
  ['成品板厚公差', '+/-10%'], ['是否入库前压板', 'N'], ['平均孔壁铜厚', '/'], ['最小孔壁铜厚', '/'], ['每批次最多允许报废SET', '/'],
  ['每SET最多允许报废单元', '/'], ['孔符图1', '2b5n609la0_dr...'], ['孔符图2', '/'], ['是否可制造优化', 'Y'],
  ['成品板厚是否含阻焊', 'Y'], ['成品板厚是否含铜厚', 'Y'], ['是否做邦定焊盘测试', '/'], ['邦定焊盘图纸1', '/'], ['邦定焊盘图纸2', '/'],
  ['最小邦定焊盘大小', '/'], ['补强面', '/'], ['补强图纸', '/'], ['板面平整度的最大极差', '0.15'], ['是否需要数孔', 'Y'],
  ['是否需要验孔检查', 'Y'], ['是否做无源互调测试', 'N'], ['无源互调测试功率', '/'], ['无源互调测试标准', '/'], ['验孔文件名', '/'],
  ['AVI文件名', '/'],
];

const sheetTabs = ['外形', '电测试', '重点流程制作', '拼板', '激光盲孔', '机械盲埋孔', '盲孔板负片电镀', '参数表', '图例库'];

/* ---------- sections ---------- */

function AppToolbar() {
  const c = <Caret $color="#1e395b" />;
  return (
    <Toolbar>
      <Switches>
        <SwitchItem><input type="checkbox" /><Switch><b>OFF</b></Switch>编写流程(R)</SwitchItem>
        <SwitchItem><input type="checkbox" /><Switch><b>OFF</b></Switch>启动修改(E)<span>取消(Z)</span></SwitchItem>
      </Switches>
      <Tool $off $w={67}><FaCheck /><span>保存信息(S)</span></Tool>
      <Tool><FaPrint /><span>内部审核</span>{c}</Tool>
      <Tool><FaRegCheckSquare /><span>指示检查</span>{c}</Tool>
      <Tool><FaUpload /><span>发送指示</span></Tool>
      <Tool><FaCloudUploadAlt /><span>文控上网</span></Tool>
      <Tool $w={42}><FaBinoculars /><span>ECN升级</span></Tool>
      <Tool $off><FaRegImage /><span>重选开料图</span></Tool>
      <Tool $w={58}><FaSignInAlt /><span>MI数据导入</span>{c}</Tool>
      <Tool><FaDownload /><span>集成</span>{c}</Tool>
      <Tool><FaCompressAlt /><span>数据对比</span>{c}</Tool>
      <Tool $w={42} $start><FaRandom /><span>选择</span></Tool>
      <Tool $w={54} aria-label="List"><FaListOl /></Tool>
      <Tool $w={68} aria-label="Feedback"><FaRegSmile /></Tool>
      <Tool $w={86} aria-label="Tools"><FaWrench /></Tool>
      <Tool $w={58} aria-label="Favourites"><FaStar /></Tool>
    </Toolbar>
  );
}

function ProcessTree() {
  return (
    <TreeTable>
      <colgroup><col style={{ width: 155 }} /><col style={{ width: 55 }} /><col style={{ width: 75 }} /><col style={{ width: 75 }} /><col /></colgroup>
      <thead>
        <tr><th>流程</th><th><Words size={10}>BOM工厂</Words></th><th>编写人</th><th>核审人</th><th>状态</th></tr>
      </thead>
      <tbody>
        <PeekRow>
          <td><NodeCell $trunk="100%" $branch="0"><NodeLabel as="div"><Sheetlet /></NodeLabel></NodeCell></td>
          <td /><td /><td /><td />
        </PeekRow>
        {tree.map(([group, kids], g) => {
          const last = g === tree.length - 1;
          return (
            <React.Fragment key={g}>
              <TreeRow>
                <td>
                  <NodeCell $group $trunk={last ? '50%' : '100%'} $branch="0">
                    <Expander aria-label="Collapse" /><Folder /><NodeLabel $group>{group}</NodeLabel>
                  </NodeCell>
                </td>
                <td>P6</td><td>刘伟巍</td><td /><td>已编写</td>
              </TreeRow>
              {kids.map((name, k) => {
                const active = name === '功能检查';
                return (
                  <TreeRow key={k} $active={active}>
                    <td>
                      <NodeCell $trunk={last ? '0' : '100%'} $branch={k === kids.length - 1 ? '55%' : '100%'}>
                        <NodeLabel $active={active}><Sheetlet />{name}</NodeLabel>
                      </NodeCell>
                    </td>
                    <td>P6</td><td>刘伟巍</td><td /><td>已编写</td>
                  </TreeRow>
                );
              })}
            </React.Fragment>
          );
        })}
        <tr><td /><td /><td /><td /><td /></tr>
      </tbody>
    </TreeTable>
  );
}

function RibbonPanel() {
  const c = <Caret />;
  return (
    <Ribbon>
      <Group $w={70}>
        <GroupBody $row>
          <Paste $w={36}><PasteIcon /><span>粘贴</span>{c}</Paste>
          <Stack $gap={5}><Small $w={16} aria-label="Cut"><Cut /></Small><Small $w={16} aria-label="Copy"><Copy /></Small><Small $w={16} aria-label="Format painter"><Brush /></Small></Stack>
        </GroupBody>
        <GroupCaption><span>剪贴板</span><Launcher /></GroupCaption>
      </Group>
      <Group $w={150}>
        <GroupBody>
          <Row $gap={0}>
            <Picker $w={96}><select aria-label="Font"><option>宋体</option></select>{c}</Picker>
            <Picker $w={47}><select aria-label="Size"><option>10</option></select>{c}</Picker>
          </Row>
          <Row>
            <Cluster><Small $serif>B</Small><Small $serif><em>I</em></Small><Small $serif $on><u>U</u></Small><Small $w={12}>{c}</Small></Cluster>
            <Cluster><Small $serif $raised>A<Caret $up /></Small><Small $w={21} $raised aria-label="Shrink font"><b>A</b><Caret /></Small></Cluster>
          </Row>
          <Row>
            <Cluster>
              <Small $w={33} aria-label="Borders">
                <svg width="14" height="14" viewBox="0 0 14 14" stroke="#555" fill="none"><path d="M.5.5h13v12H.5zM7 0v13M0 6.500h14" strokeDasharray="1 1" /><path d="M0 13h14" stroke="#000" strokeWidth="2" /></svg>{c}
              </Small>
            </Cluster>
            <Cluster>
              <Small $w={33} aria-label="Fill">
                <svg width="16" height="16" viewBox="0 0 16 16"><path d="M3 7l5-5 5 5-5 4z" fill="#f4f6fa" stroke="#5a6e92" /><path d="M12 5c3 0 3 3 2.500 6" stroke="#3f6fc0" strokeWidth="2" fill="none" /><path d="M0 12h14v4H0z" fill="#ff0" /></svg>{c}
              </Small>
              <Small $w={32} aria-label="Font colour">
                <svg width="16" height="17" viewBox="0 0 16 17"><text x="3" y="12" fontFamily="Liberation Serif" fontWeight="bold" fontSize="15" fill="#3a57a0">A</text><path d="M0 13h16v4H0z" fill="#e01010" /></svg>{c}
              </Small>
            </Cluster>
            <Cluster>
              <Small $w={32} aria-label="Phonetic">
                <svg width="17" height="18" viewBox="0 0 17 18"><text x="0" y="6" fontFamily="Liberation Sans" fontSize="8" fill="#222">wén</text><path d="M3 10h11M8.500 8v2M5 11c1 3 4 5 8 6M12 11c-1 3-4 5-8 6" stroke="#2c45b0" strokeWidth="1.300" fill="none" /></svg>{c}
              </Small>
            </Cluster>
          </Row>
        </GroupBody>
        <GroupCaption><span>字体</span><Launcher /></GroupCaption>
      </Group>
      <Group $w={112}>
        <GroupBody $pad={5}>
          <Row>
            <Cluster><Small aria-label="Top"><Lines y={3} /></Small><Small $on aria-label="Middle"><Lines y={5} /></Small><Small aria-label="Bottom"><Lines y={8} /></Small></Cluster>
            <Small $w={28} aria-label="Wrap"><svg width="16" height="16" viewBox="0 0 16 16" fill="none"><path d="M0 1.500h11M1 4h9M2 9.500h7M2 12.500h7" stroke="#444" /><path d="M.5 2.500h11v3H.5zM1.500 8.500h8v6h-8z" stroke="#889" /><path d="M12 4h3v5h-3M13 7l-2 2 2 2" stroke="#3a5ea8" /></svg></Small>
          </Row>
          <Row>
            <Cluster><Small aria-label="Left"><Lines y={1} rows={[14, 9, 14, 9, 14]} /></Small><Small $on aria-label="Centre"><Lines y={1} rows={[14, 8, 14, 8, 14]} align="c" /></Small><Small aria-label="Right"><Lines y={1} rows={[14, 9, 14, 9, 14]} align="r" /></Small></Cluster>
            <Cluster>
              <Small $on $w={31} aria-label="Merge"><svg width="16" height="16" viewBox="0 0 16 16" fill="#fff" stroke="#5b7db5"><path d="M.5 1.500h15v13H.5zM.5 4.500h15M.5 11.500h15M5.500 1.500v3M10.500 1.500v3M5.500 11.500v3M10.500 11.500v3" /><text x="5.500" y="10.500" fontSize="9" fontFamily="Liberation Sans" fill="#111" stroke="none">a</text><path d="M1 8h3M12 8h3" stroke="#111" /></svg>{c}</Small>
            </Cluster>
          </Row>
          <Row>
            <Cluster><Small aria-label="Outdent"><Indent /></Small><Small aria-label="Indent"><Indent flip /></Small></Cluster>
            <Cluster><Small $w={31} aria-label="Orientation"><svg width="16" height="16" viewBox="0 0 16 16"><text x="1" y="7" transform="rotate(45 1 5)" fontSize="11" fontFamily="Liberation Sans" fill="#111">ab</text><path d="M7 14L14 7M14 7v3M14 7h-3" stroke="#555" fill="none" /></svg>{c}</Small></Cluster>
          </Row>
        </GroupBody>
        <GroupCaption><span>对齐方式</span><Launcher /></GroupCaption>
      </Group>
      <Group $w={88}>
        <GroupBody>
          <Picker $w={80}><select aria-label="Number format"><option>常规</option></select>{c}</Picker>
          <Row>
            <Cluster>
              <Small $w={34} aria-label="Currency"><svg width="17" height="17" viewBox="0 0 17 17"><path d="M.5 1.500h14v7H.5z" fill="#5e8fd6" stroke="#2c569c" /><circle cx="7" cy="5" r="2.500" fill="#cfe0f7" /><path d="M7 9h8v3H7zM3 12h8v4H3z" fill="#f2c33c" stroke="#a87d14" /></svg>{c}</Small>
              <Small $w={22}><b>%</b></Small><Small $w={22} $serif>,</Small>
            </Cluster>
          </Row>
          <Row>
            <Cluster>
              {[['.0', '.00'], ['.00', '.0']].map(([top, bottom], i) => (
                <Small key={i} $w={21} aria-label={i ? 'Decrease decimals' : 'Increase decimals'}>
                  <svg width="18" height="17" viewBox="0 0 18 17" fontFamily="Liberation Sans" fontWeight="bold" fontSize="8"><text x={i ? 4 : 8} y="7">{top}</text><text x={i ? 9 : 4} y="16">{bottom}</text><path d={i ? 'M1 13h5M4 11l2 2-2 2' : 'M7 4H2M4 2L2 4l2 2'} stroke="#3467c0" fill="none" /></svg>
                </Small>
              ))}
            </Cluster>
          </Row>
        </GroupBody>
        <GroupCaption><span>数字</span><Launcher /></GroupCaption>
      </Group>
      <Group $w={115}>
        <GroupBody>
          <Command><ConditionIcon />条件格式{c}</Command>
          <Command><TableStyleIcon />套用表格格式{c}</Command>
          <Command><TableStyleIcon plain />单元格样式{c}</Command>
        </GroupBody>
        <GroupCaption><span>样式</span></GroupCaption>
      </Group>
      <Group $w={68}>
        <GroupBody>
          <Command><CellsIcon mark="+" />插入{c}</Command>
          <Command><CellsIcon mark="x" />删除{c}</Command>
          <Command><FormatIcon />格式{c}</Command>
        </GroupBody>
        <GroupCaption><span>单元格</span></GroupCaption>
      </Group>
      <Group $w={123}>
        <GroupBody $row $gap={0}>
          <Stack>
            <Command aria-label="Sum"><svg width="15" height="15" viewBox="0 0 15 15"><path d="M3 2h9v3h-1L10 3.500H6L9 7.500 5.500 12H10l1-2h1v4H3v-1l4-5.500L3 3z" fill="#111" /></svg>{c}</Command>
            <Command aria-label="Fill down"><svg width="14" height="16" viewBox="0 0 14 16"><path d="M.5.5h13v15H.5z" fill="#dbe8fa" stroke="#5b82c2" /><path d="M5 3h4v5h3l-5 5-5-5h3z" fill="#2f6fd8" /></svg>{c}</Command>
            <Command aria-label="Clear"><svg width="15" height="14" viewBox="0 0 15 14"><path d="M1 9l7-7 5 3-6 7H3z" fill="#f4f5f8" stroke="#6f7788" /><path d="M1 9l4 1 3 2" stroke="#6f7788" fill="none" /></svg>{c}</Command>
          </Stack>
          <Big $w={38}><SortIcon /><span>排序和</span><span>筛选{c}</span></Big>
          <Big $w={38}><FindIcon /><span>查找和</span><span>选择{c}</span></Big>
        </GroupBody>
        <GroupCaption><span>编辑</span></GroupCaption>
      </Group>
    </Ribbon>
  );
}

const W = Words;

function SheetGrid() {
  return (
    <Sheet>
      <colgroup>
        {[34, 31, 76, 126, 75, 79, 85, 113, 97, 89].map((w, i) => <col key={i} style={{ width: w }} />)}
      </colgroup>
      <thead>
        <tr><th />{['A', 'B', 'C', 'D', 'E', 'F', 'G', 'I', 'J'].map((x) => <th key={x}>{x}</th>)}</tr>
      </thead>
      <tbody>
        <tr style={{ height: 41 }}>
          <th>77</th><Cell rowSpan={16} $open /><Cell rowSpan={3} $left /><Cell rowSpan={3} $red $below={60}>2）外形倒圆角</Cell>
          <Cell colSpan={4} $red><Ln><W>b、交货单元板无附边的按半径0.5MM圆弧倒角；（包括同一</W></Ln><Ln>交货单元板一边有附边一边无附边情况）</Ln></Cell>
          <Cell colSpan={2} $center>\</Cell>
        </tr>
        <tr style={{ height: 40 }}>
          <th>78</th><Cell colSpan={4} $red><W>c、全部是附边的在附边上按半径1.5MM圆弧倒角。</W></Cell><Cell colSpan={2} $center>\</Cell>
        </tr>
        <tr style={{ height: 90 }}>
          <th>79</th>
          <Cell colSpan={4} $red>
            <Ln>d、以下情况不允许倒圆角：</Ln>
            <Ln>①V221、V050、V2HG、V172、V29G顾客所有订单，不允许</Ln>
            <Ln>圆角。</Ln>
            <Ln><W>②线路图形或钻孔距板角≤20mil，且不能移动时，不允许圆</W></Ln>
            <Ln>角。</Ln>
          </Cell>
          <Cell colSpan={2} $center>\</Cell>
        </tr>
        <tr style={{ height: 38 }}>
          <th>80</th><Cell $thick $left><Ln>6、注意事</Ln><Ln>项</Ln></Cell><Cell $thick />
          <Cell colSpan={4} $thick><Ln>对于顾客提供了外形图纸的要将图纸提供给生产，以便生产</Ln><Ln>检查</Ln></Cell><Cell colSpan={2} $thick />
        </tr>
        <tr style={{ height: 22 }}>
          <th>81</th><Cell rowSpan={12} $center $left><Ln>7、小板切</Ln><Ln>割板制作要</Ln><Ln>求</Ln></Cell><Cell rowSpan={6}>1）适用范围</Cell>
          <Cell colSpan={6}><W>a、加工板材：普通FR-4、非PTFE、PTFE、铜基、铝基、玻璃、硅片等；</W></Cell>
        </tr>
        <tr style={{ height: 22 }}><th>82</th><Cell colSpan={6}><W>b、加工板厚0.1-2.5mm；</W></Cell></tr>
        <tr style={{ height: 22 }}><th>83</th><Cell colSpan={6}><W>c、切割公差+/-0.05mm，如有铣外形与切割同时存在按铣外形常规公差要求；</W></Cell></tr>
        <tr style={{ height: 38 }}>
          <th>84</th><Cell colSpan={6}><Ln>d、加工时必须满足直线，无凹凸形、圆形、弧形等异常外形。如有先有采用铣外形处理后</Ln><Ln $in={20}>进行切割；</Ln></Cell>
        </tr>
        <tr style={{ height: 35 }}>
          <th>85</th><Cell colSpan={6} $red><Ln><W>e、切割大小：最大200*200mm，最小5*5mm；切割标准拼板尺寸普通：200*180mm，批量</W></Ln><Ln><W>200*180mm</W></Ln></Cell>
        </tr>
        <tr style={{ height: 45 }}>
          <th>86</th><Cell colSpan={6}><Ln>f、客户设计无内定位孔，单元板尺寸在40*40以内的满足以上能力的可按切割工艺制作，</Ln><Ln $in={14}>按铣外形制作。</Ln></Cell>
        </tr>
        <tr style={{ height: 27 }}>
          <th>87</th><Cell rowSpan={6} $center><Ln><W>2）CAM制作要求(参</W></Ln><Ln>考板2S671005)</Ln></Cell>
          <Cell colSpan={6} rowSpan={2}>
            <Ln><W>a、CAM在编写ERP流程时，开料项目中填写1PANEL= 多少units即可，无需写1PANEL= 多</W></Ln>
            <Ln $in={28}><W>sets 和1STE= 多少units，已免调度投料下错（参考附图：切割图1）；如客户已经</W></Ln>
            <Ln $in={28}><W>是拼板文件，要求铣开交货的，按SET拼板即可（参考附图：切割图2）；</W></Ln>
          </Cell>
        </tr>
        <tr style={{ height: 27 }}><th>88</th></tr>
        <tr style={{ height: 26 }}>
          <th>89</th><Cell colSpan={6}>b、<Red><W>ERP流程：铣板---小板切割---终检。</W></Red>注意提供相应的切割图纸给生产。</Cell>
        </tr>
        <tr style={{ height: 141 }}>
          <th>90</th>
          <Cell colSpan={6}>
            <Ln><W>c、CAM制作资料时，线路、或孔距板边的距离要求按外形铣板要求设计。外形资料只须制</W></Ln>
            <Ln><W>出SET的外形以及单元板凹凸形、圆形、弧形等异常外形不可切割直线的地方（单元板内</W></Ln>
            <Ln><W>可切割须铣出的地方间距按铣外形常规要求设计；   SET拼板特别要求：为了节省切割膜</W></Ln>
            <Ln><W>本，小单元板拼      板后，尽量按标准尺寸最大化来设计。如果因为拼板后，PNL板利用率</W></Ln>
            <Ln>响，可适当在板边减小拼板尺寸来提高，但<Red><W>任意一边必须在200mm</W></Red>尺寸内做最大化设计。</Ln>
          </Cell>
        </tr>
        <tr style={{ height: 40 }}>
          <th>91</th><Cell colSpan={6}><Ln><W>d、CAM设计时如板内有凹槽、弧形以及斜角等异常外形时，设计成SET铣外形时，同样要</W></Ln><Ln $in={20}>板内异常外形铣出。具体可参考：切割图3。</Ln></Cell>
        </tr>
        <tr style={{ height: 261 }}>
          <th /><Cell colSpan={6} $top><W>e、切割设计时，两个单元之间设计0.15mm（6mil）宽的切割道，并且在切割道两端的工</W></Cell>
        </tr>
      </tbody>
    </Sheet>
  );
}

function Workbook() {
  return (
    <Win>
      <TitleBar>
        <Quick><QuickPill><Save /></QuickPill><Caret $color="#334a6e" /><Glass $w={64} /><Glass $w={28} /></Quick>
        <h1>P6 CAM制作规范20190718.xls  [兼容模式]  -  Microsoft Excel</h1>
        <WinButtons>
          <WinButton aria-label="Minimise"><svg width="13" height="6"><rect x=".5" y=".5" width="12" height="4" rx="1" fill="#fff" stroke="#556" /></svg></WinButton>
          <WinButton aria-label="Restore"><svg width="13" height="11"><rect x="1.500" y="1.500" width="9" height="7" fill="none" stroke="#556" strokeWidth="3" /><rect x="1.500" y="1.500" width="9" height="7" fill="none" stroke="#fff" /></svg></WinButton>
          <WinButton $close aria-label="Close"><svg width="13" height="12"><path d="M2.500 2l8 8M10.500 2l-8 8" stroke="#633" strokeWidth="4" /><path d="M2.500 2l8 8M10.500 2l-8 8" stroke="#fff" strokeWidth="2.500" /></svg></WinButton>
        </WinButtons>
      </TitleBar>
      <Client>
        <RibbonTabs>
          <RibbonTab $active>开始</RibbonTab>
          {['插入', '页面布局', '公式', '数据', '审阅', '视图'].map((t) => <RibbonTab key={t}>{t}</RibbonTab>)}
          <BookTools>
            <button aria-label="Help"><svg width="14" height="14" viewBox="0 0 14 14"><circle cx="7" cy="7" r="6.500" fill="#2f6fd0" stroke="#9db8e0" /><text x="4" y="11" fontSize="11" fontWeight="bold" fontFamily="Liberation Sans" fill="#fff">?</text></svg></button>
            <button aria-label="Minimise book"><svg width="9" height="10"><path d="M1 8h7" stroke="#667" strokeWidth="2" /></svg></button>
            <button aria-label="Restore book"><svg width="10" height="9" fill="none" stroke="#667"><path d="M2.500 2.500V.5h7v5h-2M.5 3h7v5h-7zM0 3.500h8" /></svg></button>
            <button aria-label="Close book"><svg width="10" height="10"><path d="M1 1l8 8M9 1L1 9" stroke="#667" strokeWidth="2" /></svg></button>
          </BookTools>
        </RibbonTabs>
        <RibbonPanel />
        <FormulaBar>
          <NameBox><input aria-label="Name box" defaultValue="L37" /><Caret $color="#000" $size={4} /></NameBox>
          <FxBox><i /><em>fx</em></FxBox>
          <FormulaInput aria-label="Formula" defaultValue="附表H1" />
          <ExpandButton aria-label="Expand"><svg width="8" height="10" viewBox="0 0 8 10" fill="none" stroke="#111" strokeWidth="1.500"><path d="M1 1l3 3 3-3M1 5.500l3 3 3-3" /></svg></ExpandButton>
        </FormulaBar>
        <SheetArea>
          <SheetScroll><SheetGrid /></SheetScroll>
          <SheetVBar><span /><Caret $up $size={4} $color="#3b5687" /><Thumb $h={131} /><Caret $size={4} $color="#3b5687" /></SheetVBar>
          <Mark />
        </SheetArea>
        <SheetTabs>
          <TabNav>
            <button aria-label="First"><svg width="8" height="8"><path d="M1 0v8" stroke="#1b3d78" strokeWidth="2" /><path d="M7 0v8L2 4z" fill="#1b3d78" /></svg></button>
            <button aria-label="Previous"><SideCaret $size={4} $color="#1b3d78" /></button>
            <button aria-label="Next"><SideCaret $right $size={4} $color="#1b3d78" /></button>
            <button aria-label="Last"><svg width="8" height="8"><path d="M7 0v8" stroke="#1b3d78" strokeWidth="2" /><path d="M1 0v8l5-4z" fill="#1b3d78" /></svg></button>
          </TabNav>
          <TabStrip>{sheetTabs.map((t, i) => <SheetTab key={t} $active={i === 0}>{t}</SheetTab>)}</TabStrip>
          <TabScroll><span /><SideCaret $size={4} $color="#2b4a80" /><Thumb $w={16} /><SideCaret $right $size={4} $color="#2b4a80" /><span /></TabScroll>
        </SheetTabs>
        <BookStatus>
          就绪
          <ViewTools>
            <ViewButton $on aria-label="Normal"><svg width="13" height="11" fill="#fff" stroke="#6b6b6b"><path d="M.5.5h12v10H.5zM.5 4h12M.5 7h12M4.500.5v10M8.500.5v10" /></svg></ViewButton>
            <ViewButton aria-label="Page layout"><svg width="13" height="12" fill="#fff" stroke="#6b6b6b"><path d="M.5.5h12v11H.5zM3.500 2.500h6v7h-6zM5 5h3M5 7h3" /></svg></ViewButton>
            <ViewButton aria-label="Page break"><svg width="13" height="12" fill="#fff" stroke="#6b6b6b"><path d="M.5.5h12v11H.5zM3.500.5v6h6v-6M6.500.5v6" /></svg></ViewButton>
            <span>100%</span>
            <Round aria-label="Zoom out">-</Round><Zoom type="range" aria-label="Zoom" defaultValue="50" /><Round aria-label="Zoom in">+</Round>
            <Grip />
          </ViewTools>
        </BookStatus>
      </Client>
      <OfficeButton aria-label="Office"><OfficeLogo /></OfficeButton>
    </Win>
  );
}

export default function App() {
  return (
    <Page>
      <Global />
      <DocTabs>
        <DocTab><Tail>指示</Tail><button aria-label="Close tab">×</button></DocTab>
        <TabMenu aria-label="Open tabs"><Caret $size={5} $color="#1e395b" /></TabMenu>
      </DocTabs>
      <AppToolbar />
      <MainInfo>
        <Legend $l={759} $r={838} $h={21}><span>主要信息</span></Legend>
        <InfoBody>
          <InfoTable>
            <colgroup>{infoCols.map(([, w], i) => <col key={i} style={{ width: w }} />)}</colgroup>
            <thead><tr>{infoCols.map(([t], i) => <th key={i}>{i ? t : <Tail>{t}</Tail>}</th>)}</tr></thead>
            <tbody><tr>{infoCols.map(([, , v], i) => <td key={i}>{i ? v : <Tail>{v}</Tail>}</td>)}</tr></tbody>
          </InfoTable>
        </InfoBody>
      </MainInfo>
      <HSplit><Caret $up $size={4} $color="#2d4a85" /><Dots /><Caret $up $size={4} $color="#2d4a85" /></HSplit>
      <Work>
        <FlowPanel>
          <Legend $l={167} $r={246} $h={21}><span>【<Mono $size={10}>2B5N609LA0</Mono>】工艺流程</span></Legend>
          <FlowBody>
            <Messages>
              <MessageHead><Tail>节点加载工艺流程</Tail><FaComment /></MessageHead>
              <MessageBox />
            </Messages>
            <VSplit $w={6} $top={328}><SideCaret $size={4} $color="#2d4a85" /><Dots $v /><SideCaret $size={4} $color="#2d4a85" /></VSplit>
            <TreeBox>
              <TreeMain>
                <TreeScroll><ProcessTree /></TreeScroll>
                <HBar><SideCaret /><Thumb $w={198} /><SideCaret $right /></HBar>
              </TreeMain>
              <TreeVBar><Caret $up $size={5} $color="#4a4a4a" /><Thumb $h={431} /><Caret $size={5} $color="#4a4a4a" /></TreeVBar>
            </TreeBox>
          </FlowBody>
        </FlowPanel>
        <VSplit $w={7} $top={341}><SideCaret $size={4} $color="#2d4a85" /><Dots $v /><SideCaret $size={4} $color="#2d4a85" /></VSplit>
        <ParamPanel>
          <PageTabs>
            <PageTab $active>基本信息</PageTab><PageTab>产品剖面信息</PageTab>
            <TabMenu aria-label="More tabs"><Caret $size={5} $color="#111" /></TabMenu>
          </PageTabs>
          <SubTabs>
            <SubTab>
              <svg width="24" height="20" viewBox="0 0 24 20"><path d="M0 20L16 3Q19 0 24 .5V20z" fill="#d0e1fa" /><path d="M0 20L16 3Q19 0 24 .5" fill="none" stroke="#4470b4" /></svg>
              <span>基本参数</span>
            </SubTab>
          </SubTabs>
          <ParamBody>
            <ParamTable>
              <colgroup><col style={{ width: 35 }} /><col style={{ width: 136 }} /><col style={{ width: 104 }} /><col /></colgroup>
              <thead>
                <tr><th><svg width="11" height="11"><path d="M11 0v11H0z" fill="#2e6fd0" /></svg></th><th>项目</th><th>参数</th><th /></tr>
              </thead>
              <tbody>
                {params.map(([k, v], i) => (
                  <tr key={k}><td>{i === 0 && <SideCaret $right $size={4} $color="#000" />}</td><td>{k}</td><td>{v}</td><td /></tr>
                ))}
              </tbody>
            </ParamTable>
            <VBar $w={16}><Caret $up $size={4} $color="#999" /><Caret $size={4} $color="#999" /></VBar>
          </ParamBody>
        </ParamPanel>
      </Work>
      <StatusBar>
        <span>正式】||DB: 【正式库】</span>
        <span>兴森快捷  <Mono $size={10}>EMS</Mono>工程系统  <Mono $size={10}>Version: 1.0.0.19</Mono></span>
        <Clock><FaRegClock /><Mono $size={10}>2020-05-23 20:51:32</Mono></Clock>
      </StatusBar>
      <Arrow width="30" height="98" viewBox="0 0 30 98">
        <path d="M8 1l11 20-4 0L22 93l-3 1L10 21l-5 1z" fill="#f87e7e" />
      </Arrow>
      <Workbook />
    </Page>
  );
}
